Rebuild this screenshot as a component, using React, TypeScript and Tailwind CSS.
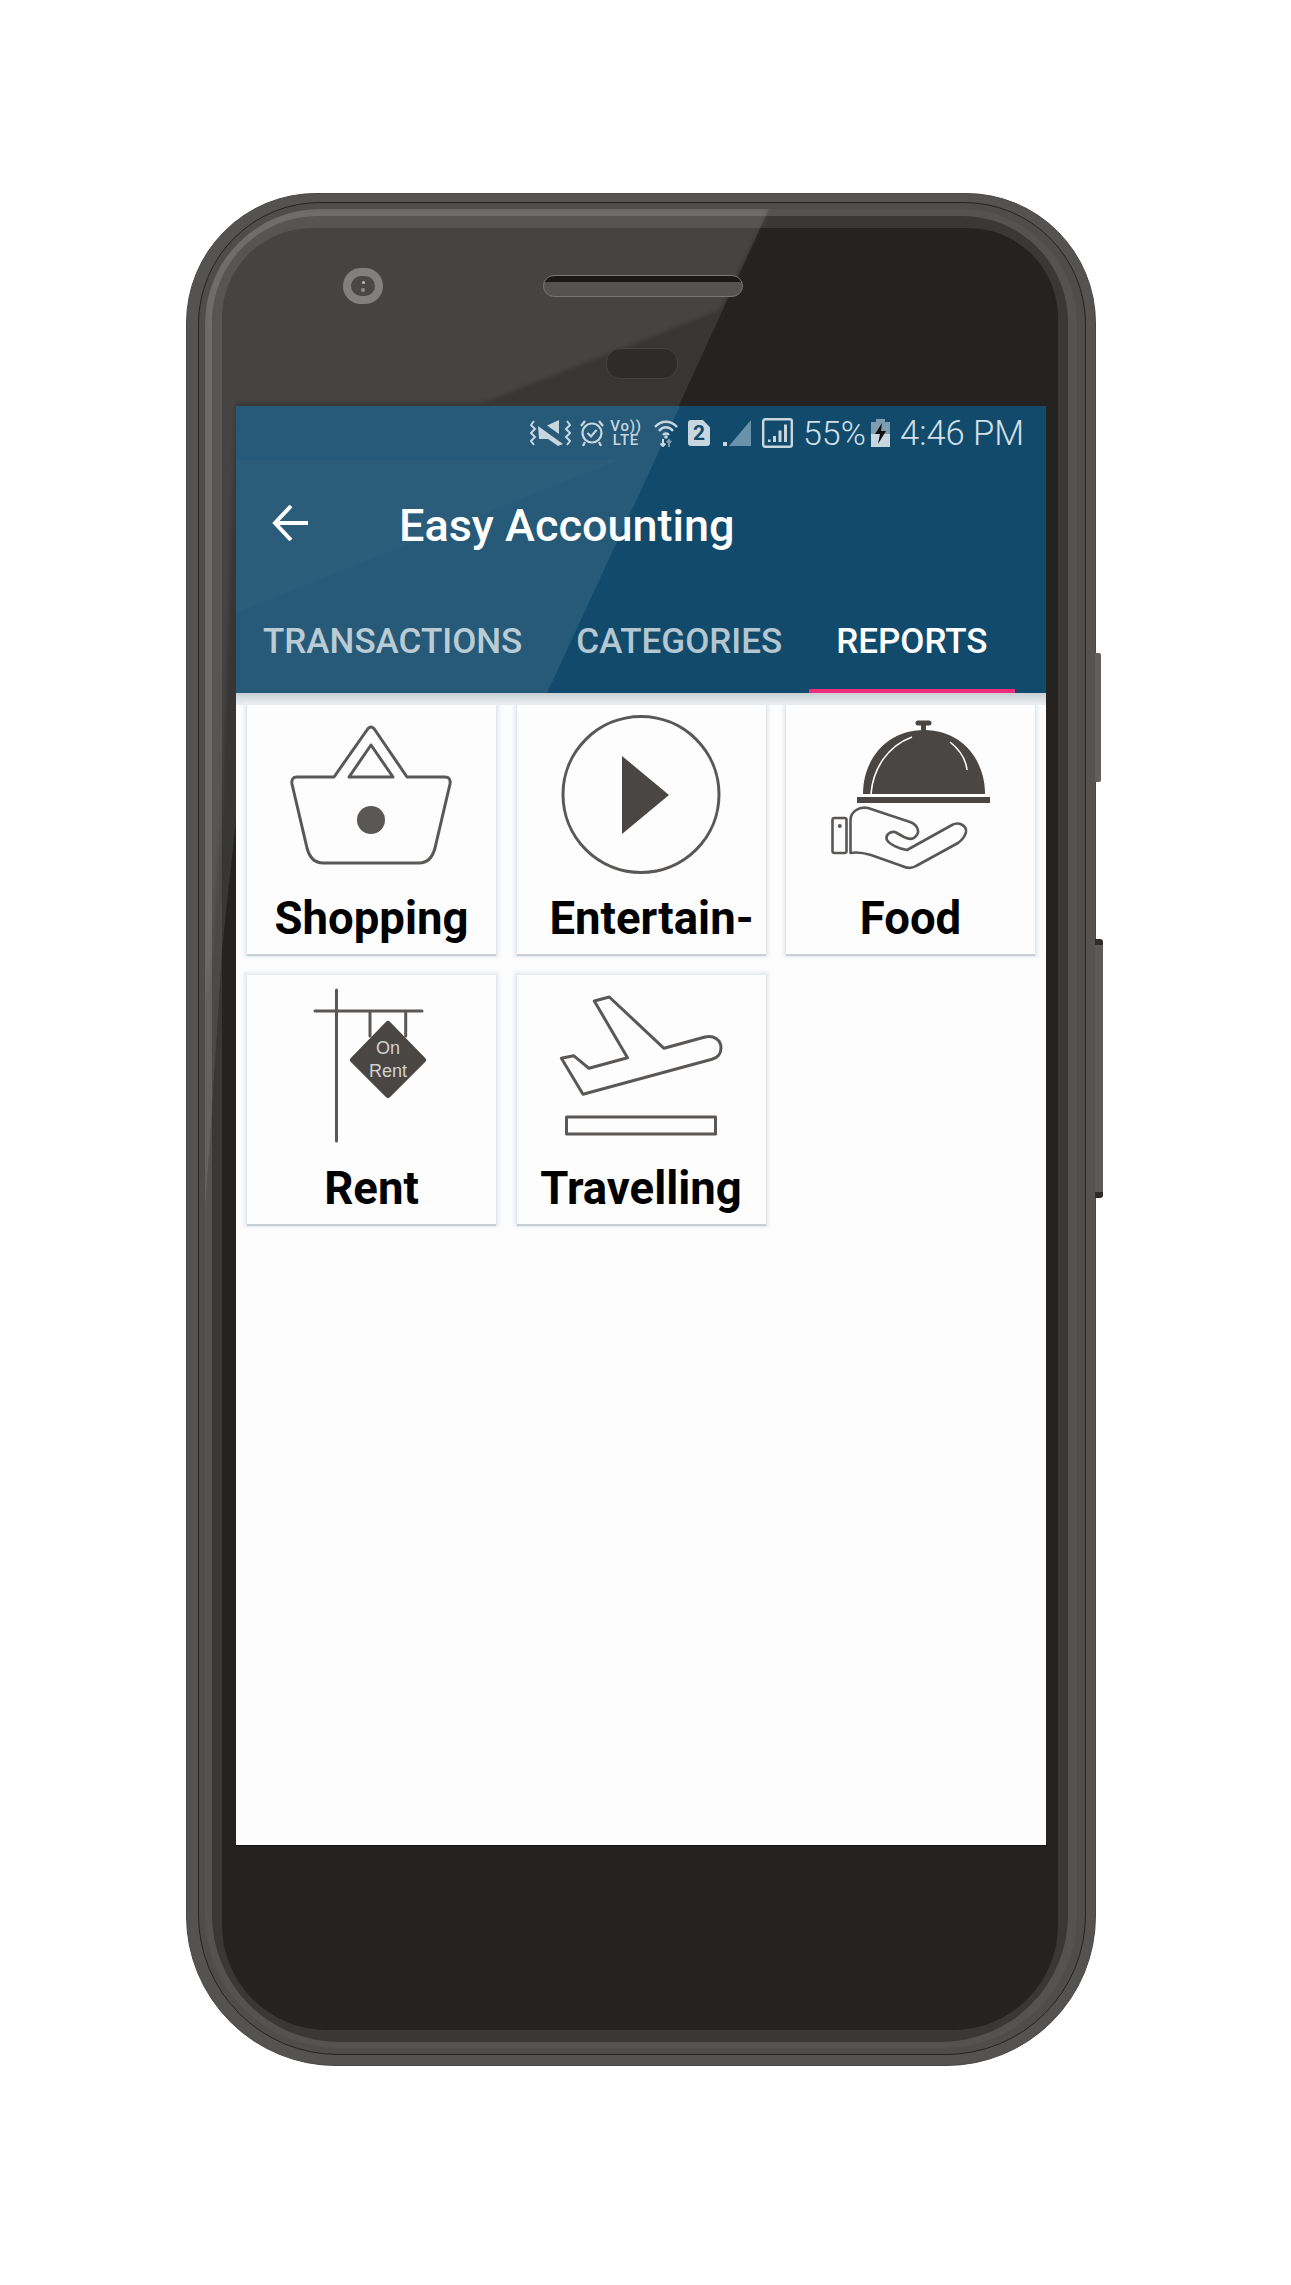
const ink = "#5a5856";
const solid = "#494644";

function Shopping() {
  return (
    <svg width="170" height="170" viewBox="0 0 170 170" fill="none" stroke={ink} strokeWidth="3" strokeLinejoin="round">
      <path d="M47 67H10Q4 67 5 74L20 138Q24 153 36 153H132Q144 153 148 138L163 74Q164 67 158 67H120L88 20Q84 14 80 20Z" />
      <path d="M84 35L62 67H106Z" />
      <circle cx="84" cy="110" r="14" fill={ink} stroke="none" />
    </svg>
  );
}

function Play() {
  return (
    <svg width="170" height="170" viewBox="0 0 170 170" fill="none" stroke={ink} strokeWidth="3">
      <circle cx="85" cy="84.5" r="78" />
      <path d="M66 46L113 85L66 124Z" fill={solid} stroke="none" />
    </svg>
  );
}

function Food() {
  return (
    <svg width="170" height="170" viewBox="0 0 170 170" fill="none">
      <path d="M92 13h11M97.5 13v8" stroke={solid} strokeWidth="5" strokeLinecap="round" />
      <path d="M37 84C37 50 60 20 98 20C136 20 159 50 159 84Z" fill={solid} />
      <path d="M31 87H164V93H31Z" fill={solid} />
      <path d="M86 27C62 36 47 58 45 84" stroke="#fff" strokeWidth="1.6" />
      <path d="M124 32C134 40 140 50 141 60" stroke="#fff" strokeWidth="1.6" />
      <rect x="6.5" y="108" width="14" height="35" rx="2" stroke={ink} strokeWidth="2.6" />
      <circle cx="13.8" cy="116" r="2" fill={ink} />
      <path d="M24.500 143V110C24.500 102 33 96 42 98L84 112C92 115 94 122 90 126C87 130 82 129 78 127L69 122C63 121 59 126 61 130C63 134 73 139 81 140L126 115C133 111 141 116 140 122C139 127 136 130 132 133L90 156C85 159 80 158 76 156L45 145C38 143 30 142 24.500 143Z" stroke={ink} strokeWidth="2.6" strokeLinejoin="round" />
    </svg>
  );
}

function Rent() {
  return (
    <svg width="170" height="170" viewBox="0 0 170 170" fill="none">
      <path d="M49.500 10V161M28 31H135M83 31V56M118.700 31V56" stroke={ink} strokeWidth="3" strokeLinecap="round" />
      <path d="M101 44L136 80L101 115L66 80Z" fill={solid} stroke={solid} strokeWidth="6" strokeLinejoin="round" />
      <text x="101" y="74" textAnchor="middle" fontFamily="'Liberation Sans',sans-serif" fontSize="18" fill="#d4d2d0">On</text>
      <text x="101" y="97" textAnchor="middle" fontFamily="'Liberation Sans',sans-serif" fontSize="18" fill="#d4d2d0">Rent</text>
    </svg>
  );
}

function Travel() {
  return (
    <svg width="170" height="170" viewBox="0 0 170 170" fill="none" stroke={ink} strokeWidth="3" strokeLinejoin="round">
      <path d="M38.300 21L53.300 17L108 68.300L149 57C158 55 165 60 165 68C165 74 161 78 156 79.300L27 114.300L5.400 78.300L17.600 75.700L33 88.300L71.500 77.700Z" />
      <rect x="10.500" y="137" width="149" height="17" />
    </svg>
  );
}

function StatusIcons() {
  const c = "#c7d6df";
  return (
    <>
      <svg width="41" height="28" viewBox="0 0 41 28" fill="none" className="mr-[9px]">
        <path d="M4 2L1 6L5 10L1 14L5 18L1 22L4 26M37 2L40 6L36 10L40 14L36 18L40 22L37 26" stroke={c} strokeWidth="2" />
        <path d="M29 1V15L17 6.500Z" fill={c} />
        <path d="M8 7L33 25L28 27L18 20H9Z" fill={c} />
      </svg>
      <svg width="24" height="28" viewBox="0 0 24 28" fill="none" stroke={c} strokeWidth="2.2" className="mr-[9px]">
        <circle cx="12" cy="14" r="9.500" />
        <path d="M7.500 14L11 17.500L16.500 11M1 7L5 2M23 7L19 2M5 23L3 27M19 23L21 27" />
      </svg>
      <div className="w-[26px] mr-[15px] flex flex-col items-center text-[15px] leading-[14px] font-medium tracking-[0.8px] text-[#c7d6df] whitespace-nowrap">
        <span>Vo))</span>
        <span>LTE</span>
      </div>
      <svg width="24" height="28" viewBox="0 0 24 28" fill="none" stroke={c} strokeWidth="2.400" className="mr-[10px]">
        <path d="M1 8C7 1 17 1 23 8M5 12C9 7 15 7 19 12M9 16C10.500 14 13.500 14 15 16" />
        <circle cx="12" cy="18" r="1.800" fill={c} stroke="none" />
        <path d="M9 20V27M6.500 24.500L9 27L11.500 24.500" strokeWidth="2" />
        <path d="M15 28V21M12.800 23.500L15 21L17.200 23.500" stroke="#7f9db0" strokeWidth="2" />
      </svg>
      <div className="w-[22px] h-[26px] mr-[13px] rounded-[3px] bg-[#c7d6df] [clip-path:polygon(0_0,68%_0,100%_28%,100%_100%,0_100%)] flex items-center justify-center text-[21px] leading-none font-bold text-[#114a6b]">
        2
      </div>
      <svg width="28" height="26" viewBox="0 0 28 26" className="mr-[11px]">
        <path d="M28 0V26H6Z" fill="#6a93ab" />
        <path d="M0 26V22H4V26Z" fill={c} />
      </svg>
      <svg width="31" height="30" viewBox="0 0 31 30" fill="none" className="mr-[10px]">
        <rect x="1.200" y="1.200" width="28.600" height="27.600" rx="2" stroke={c} strokeWidth="2.400" />
        <path d="M6 24V21.500H8.500V24ZM11 24V18H14V24ZM16.500 24V12.500H19.500V24ZM22 24V6.500H25V24Z" fill={c} />
      </svg>
      <span className="w-[61px] mr-[7px] text-[34px] leading-none font-light text-[#d3e0e8] whitespace-nowrap">55%</span>
      <svg width="19" height="28" viewBox="0 0 19 28" className="mr-[10px]">
        <path d="M5 0H14V3H19V28H0V3H5Z" fill="#7f9db0" />
        <path d="M0 15H19V28H0Z" fill={c} />
        <path d="M11 4L4 15H9L7 25L15 12H10Z" fill="#111" />
      </svg>
      <span className="w-[122px] text-[34.5px] leading-none font-light text-[#d3e0e8] whitespace-nowrap">4:46 PM</span>
    </>
  );
}

function Card({ label, children, shift }: { label: string; children: React.ReactNode; shift?: boolean }) {
  return (
    <div className="h-[249px] w-[249px] bg-[#fdfdfd] shadow-[0_2px_1px_#c9d0d4,0_0_3px_3px_#e8ecef] flex flex-col items-center pt-[5px]">
      {children}
      <div className={shift ? "self-start ml-[33px] mt-[12px] text-[45.5px] leading-[54px] font-bold text-black whitespace-nowrap" : "mt-[12px] text-[45.5px] leading-[54px] font-bold text-black whitespace-nowrap"}>
        {label}
      </div>
    </div>
  );
}

export default function App() {
  return (
    <div className="relative w-[1291px] h-[2285px] bg-white overflow-hidden font-[Roboto,sans-serif]">
      <div className="absolute left-[1095px] top-[653px] w-[6px] h-[129px] rounded-r-[2px] bg-[#615f5d]" />
      <div className="absolute left-[1095px] top-[939px] w-[8px] h-[259px] rounded-r-[3px] bg-[#5c5a58] border-y-[6px] border-y-[#2d2b2a]" />
      <div className="ml-[186px] mt-[193px] w-[910px] h-[1873px] rounded-t-[130px] rounded-b-[150px] bg-[#555351] border border-[#4a4846] pl-[11px] pr-[9px] pt-[8px] pb-[10px] flex">
        <div className="flex-1 rounded-t-[122px] rounded-b-[140px] bg-[#4f4d4b] border border-[#242321] pl-[6px] pr-[8px] pt-[6px] pb-[6px] flex">
          <div className="relative flex-1 overflow-hidden rounded-t-[115px] rounded-b-[133px] bg-[#555351] pl-[7px] pr-[9px] pt-[7px] pb-[6px] flex">
            <div className="flex-1 rounded-t-[106px] rounded-b-[127px] bg-[#3a3734] pl-[10px] pr-[10px] pt-[12px] pb-[12px] flex">
              <div className="flex-1 rounded-t-[90px] rounded-b-[105px] bg-[#242321] flex flex-col">
                <div className="relative z-10 h-[178px]">
                  <div className="flex items-center pt-[40px] pl-[121px]">
                    <div className="w-[40px] h-[36px] rounded-full bg-[#4a4745] border-[8px] border-[#82807e] flex flex-col items-center justify-center gap-[4px]">
                      <div className="w-[3px] h-[3px] rounded-full bg-[#bdbcba]" />
                      <div className="w-[4px] h-[4px] rounded-full bg-[#8f8d8b]" />
                    </div>
                    <div className="ml-[160px] w-[200px] h-[22px] rounded-full border border-[#787674] bg-[linear-gradient(#1a1918_0_30%,#555351_30%)]" />
                  </div>
                  <div className="ml-[384px] mt-[44px] w-[72px] h-[31px] rounded-[14px] bg-[#2d2c2a] border border-[#454341]" />
                </div>
                <div className="relative z-10 ml-[14px] w-[810px] h-[1440px] bg-[#fdfdfd] border-b border-b-[#111]">
                  <div className="relative h-[287px] bg-[#114a6b] text-white">
                    <div className="absolute inset-0 bg-white/[0.09] [clip-path:polygon(0_0,444px_0,311px_287px,0_287px)]" />
                    <div className="absolute inset-0 bg-white/[0.025] [clip-path:polygon(0_54px,383px_54px,0_207px)]" />
                    <div className="relative flex flex-col h-full">
                      <div className="h-[54px] pr-[24px] flex items-center justify-end text-[#c7d6df]">
                        <StatusIcons />
                      </div>
                      <div className="h-[130px] flex items-center pl-[36px]">
                        <svg width="36" height="36" viewBox="0 0 36 36" fill="none" stroke="#fff" strokeWidth="4" className="mb-[4px]">
                          <path d="M36 18H3M19 1L3 18L19 35" />
                        </svg>
                        <h1 className="ml-[91px] mt-[1px] text-[45px] leading-none font-medium whitespace-nowrap">Easy Accounting</h1>
                      </div>
                      <div className="flex-1 flex text-[35px] font-medium">
                        <div className="px-[27px] pt-[32px] leading-[40px] text-white/70">TRANSACTIONS</div>
                        <div className="px-[27px] pt-[32px] leading-[40px] text-white/70">CATEGORIES</div>
                        <div className="px-[27px] pt-[32px] leading-[40px] border-b-[4px] border-b-[#f02d7d]">REPORTS</div>
                      </div>
                    </div>
                  </div>
                  <div className="h-[12px] -mb-[12px] bg-[linear-gradient(#c8d0d5,#eceff1)]" />
                  <div className="relative grid grid-cols-[249px_249px_249px] gap-x-[20.5px] gap-y-[20.5px] pl-[11px] pt-[12px]">
                    <Card label="Shopping"><Shopping /></Card>
                    <Card label="Entertain-" shift><Play /></Card>
                    <Card label="Food"><Food /></Card>
                    <Card label="Rent"><Rent /></Card>
                    <Card label="Travelling"><Travel /></Card>
                  </div>
                </div>
              </div>
            </div>
            <div className="absolute inset-0 bg-white/[0.09] [clip-path:polygon(0_0,564px_0,342px_484px,31px_611px,17px_741px,7px_900px,0_1000px)]" />
            <div className="absolute inset-0 blur-[2px]">
              <div className="absolute inset-0 bg-white/[0.07] [clip-path:polygon(0_0,564px_0,515px_101px,278px_194px,31px_194px,17px_600px,7px_741px,0_800px)]" />
            </div>
          </div>
        </div>
      </div>
    </div>
  );
}
